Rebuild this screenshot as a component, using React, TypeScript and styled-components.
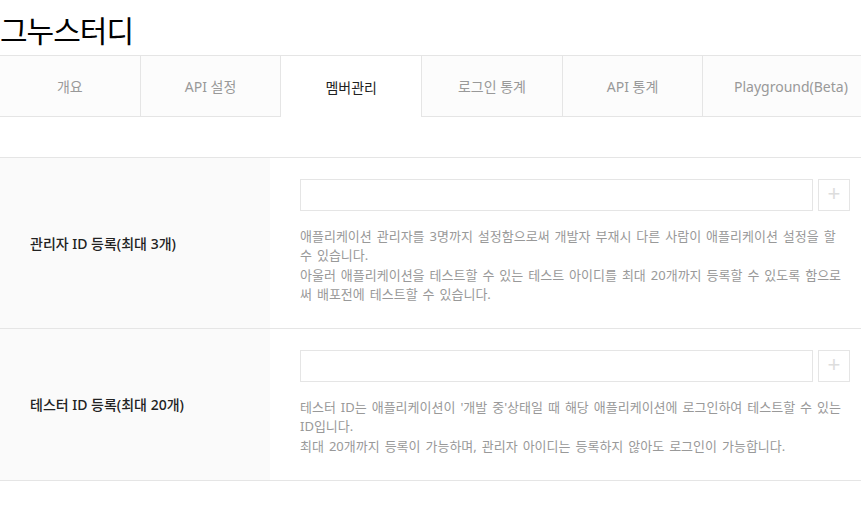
import styled, { createGlobalStyle } from 'styled-components';

const GlobalStyle = createGlobalStyle`
  *, *::after, *::before {
    box-sizing: border-box;
  }
  html, body {
    margin: 0;
    padding: 0;
    background: #fff;
    font-family: "Noto Sans", "Noto Sans CJK KR", sans-serif;
    overflow: hidden;
  }
`;

const tabs = ['개요', 'API 설정', '멤버관리', '로그인 통계', 'API 통계', 'Playground(Beta)'];
const activeTab = 2;

const sections = [
  {
    label: '관리자 ID 등록(최대 3개)',
    lines: [
      '애플리케이션 관리자를 3명까지 설정함으로써 개발자 부재시 다른 사람이 애플리케이션 설정을 할 수 있습니다.',
      '아울러 애플리케이션을 테스트할 수 있는 테스트 아이디를 최대 20개까지 등록할 수 있도록 함으로써 배포전에 테스트할 수 있습니다.',
    ],
  },
  {
    label: '테스터 ID 등록(최대 20개)',
    lines: [
      "테스터 ID는 애플리케이션이 '개발 중'상태일 때 해당 애플리케이션에 로그인하여 테스트할 수 있는 ID입니다.",
      '최대 20개까지 등록이 가능하며, 관리자 아이디는 등록하지 않아도 로그인이 가능합니다.',
    ],
  },
];

function App() {
  return (
    <>
      <GlobalStyle />
      <Page>
        <Title>그누스터디</Title>
        <TabBar>
          {tabs.map((tab, i) => (
            <Tab key={tab} $active={i === activeTab} $last={i === tabs.length - 1}>
              {tab}
            </Tab>
          ))}
        </TabBar>
        <Sections>
          {sections.map((section) => (
            <Row key={section.label}>
              <Label>{section.label}</Label>
              <Content>
                <InputRow>
                  <TextInput type="text" />
                  <AddButton type="button">+</AddButton>
                </InputRow>
                <Description>
                  {section.lines.map((line) => (
                    <p key={line}>{line}</p>
                  ))}
                </Description>
              </Content>
            </Row>
          ))}
        </Sections>
      </Page>
    </>
  );
}

export default App;

const Page = styled.div`
  width: 861px;
  overflow: hidden;
`;

const Title = styled.h1`
  margin: 0;
  height: 55px;
  padding-top: 9px;
  font-family: "Noto Sans CJK KR", sans-serif;
  font-size: 30px;
  font-weight: 400;
  line-height: 40px;
  color: #000;
  letter-spacing: -1px;
`;

const TabBar = styled.div`
  display: flex;
  height: 62px;
  border-top: 1px solid #e5e5e5;
  border-bottom: 1px solid #e5e5e5;
`;

const Tab = styled.div<{ $active: boolean; $last: boolean }>`
  flex: ${({ $last }) => ($last ? '0 0 176px' : '0 0 140.7px')};
  display: flex;
  align-items: center;
  justify-content: center;
  margin-bottom: ${({ $active }) => ($active ? '-1px' : '0')};
  border-right: 1px solid #e5e5e5;
  background: ${({ $active }) => ($active ? '#fff' : '#fcfcfc')};
  color: ${({ $active }) => ($active ? '#222' : '#999')};
  font-size: 14px;
`;

const Sections = styled.div`
  margin-top: 40px;
  border-top: 1px solid #e5e5e5;
`;

const Row = styled.div`
  display: flex;
  border-bottom: 1px solid #e5e5e5;
`;

const Label = styled.div`
  flex: 0 0 270px;
  display: flex;
  align-items: center;
  padding-left: 30px;
  background: #fafafa;
  color: #222;
  font-size: 14px;
  font-weight: 500;
`;

const Content = styled.div`
  flex: 1;
  padding: 21px 11px 24px 30px;
`;

const InputRow = styled.div`
  display: flex;
  gap: 5px;
`;

const TextInput = styled.input`
  flex: 1;
  height: 32px;
  border: 1px solid #e5e5e5;
  padding: 0 10px;
  outline: none;
  background: #fff;
`;

const AddButton = styled.button`
  flex: 0 0 32px;
  height: 32px;
  border: 1px solid #e5e5e5;
  background: #fff;
  color: #ddd;
  font-size: 22px;
  font-weight: 300;
  line-height: 1;
  padding: 0 0 2px;
`;

const Description = styled.div`
  margin-top: 16px;
  color: #999;
  font-size: 13px;
  line-height: 19.25px;
  word-spacing: 1.6px;

  p {
    margin: 0;
  }
`;
